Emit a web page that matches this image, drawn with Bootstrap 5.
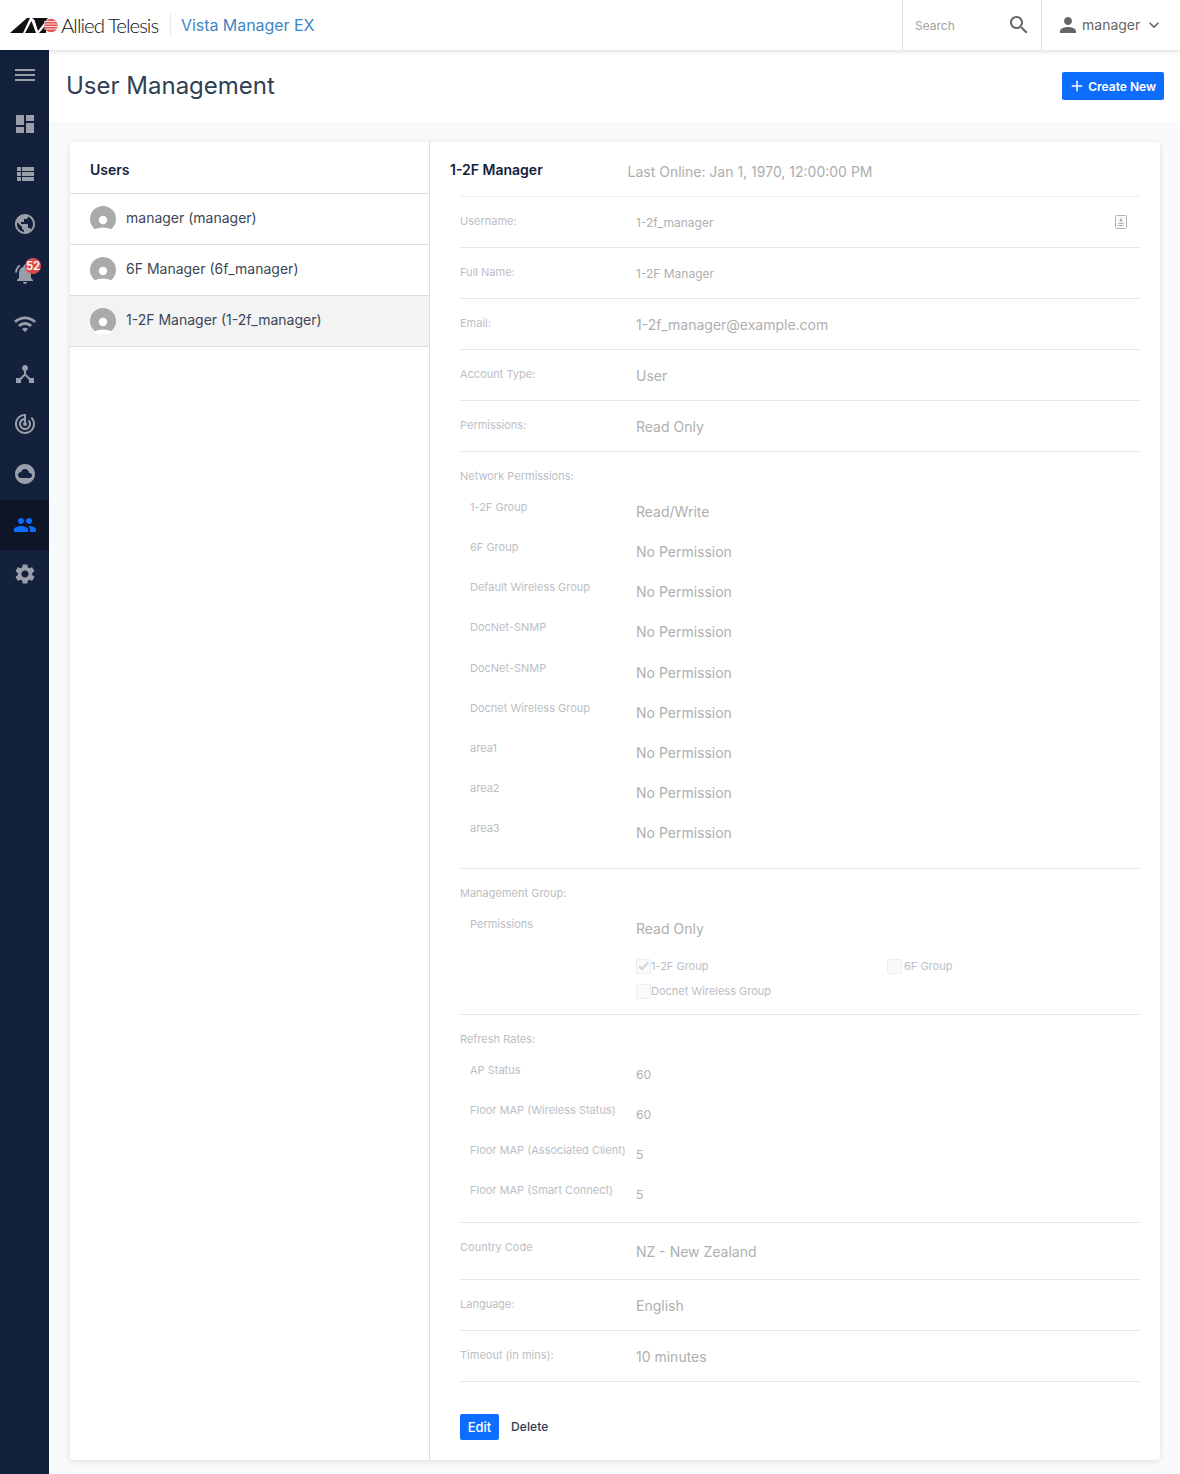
<!DOCTYPE html>
<html lang="en">
<head>
<meta charset="utf-8">
<title>User Management</title>
<link href="https://cdn.jsdelivr.net/npm/bootstrap@5.3.0/dist/css/bootstrap.min.css" rel="stylesheet">
<style>
html,body{height:100%}
body{font-family:Inter,"Liberation Sans",sans-serif;background:#f9fafc;color:#13213c;width:1180px;height:1474px;overflow:hidden}
.topbar{height:50px;background:#fff;box-shadow:0 1px 5px rgba(0,0,0,.16);position:relative;z-index:3}
.logo-mark{width:48px;height:15px;margin-left:10px;flex:none}
.logo-text{font-family:Lato,"Liberation Sans",sans-serif;font-weight:300;font-size:20.5px;letter-spacing:-1px;color:#111;margin-left:3px;line-height:50px;width:98px;white-space:nowrap}
.logo-sep{width:1px;height:24px;background:#e8eaf2;margin:0 10px 0 11px}
.product{font-size:16px;color:#3f86c5;letter-spacing:-.05px}
.search-box{width:139px;height:50px;border-left:1px solid #ddd;padding:0 10px 0 12px}
.search-box span{font-size:12px;color:#a2a2a2;margin-top:2px}
.user-box{width:139px;height:50px;border-left:1px solid #ddd;padding-left:14px;color:#666;font-size:14px}
.user-box span{margin:0 4px 2px 2px}
.side{width:49px;background:#13213c;flex:none;height:1424px}
.side-item{height:50px;color:#9a9ea9;position:relative}
.side-item svg{width:24px;height:24px;fill:currentColor}
.side-item.first{height:49px;padding-top:1px}
.side-item.active{background:#0d1526;color:#0d6efd;margin-top:1px}
.side-item.after{margin-top:-1px}
.alert-pill{position:absolute;left:25px;top:9px;width:16px;height:16px;border-radius:50%;background:#dc4c4c;color:#fff;font-size:11.5px;font-weight:600;line-height:16px;text-align:center;letter-spacing:-.2px}
.title-bar{height:72px;background:#fff;padding:0 16px 0 17px}
.title-bar h1{font-size:24px;font-weight:400;color:#2f3f55;margin:0}
.btn-make{background:#0d6efd;color:#fff;font-size:12px;font-weight:600;height:28px;padding:4px 8px 2px 6px;border-radius:2px;border:0}
.btn-make svg{width:18px;height:18px;fill:#fff;margin:-2px 2px 0 0}
.sheet{width:1090px;height:1318px;margin:20px 0 0 21px;background:#fff;border-radius:4px;box-shadow:0 1px 6px rgba(20,30,60,.12)}
.left-pane{width:360px;flex:none;border-right:1px solid #ddd}
.left-head{height:52px;border-bottom:1px solid #ddd;padding-left:20px;font-size:14px;font-weight:600;color:#13213c;line-height:56px}
.user-row{height:51px;border-bottom:1px solid #ddd;padding-left:20px;font-size:14px;color:#3c4657}
.user-row.sel{background:#f3f3f3}
.user-row span{padding-bottom:4px}
.user-row svg{width:26px;height:26px;margin-right:10px;flex:none}
.right-pane{padding:0 20px 0 30px;flex:1;min-width:0}
.right-head{height:54px;margin-left:-10px;position:relative}
.rh-name{font-size:14px;font-weight:600;color:#13213c;width:177.5px;flex:none}
.rh-last{font-size:14px;color:#adadad;position:relative;top:2px}
.pane-in{border-top:1px solid #eee}
.frow{height:51px;border-bottom:1px solid #e8e8e8;position:relative}
.frow.tall{height:57px}
.lab{width:176px;flex:none;font-size:11px;color:#bcbec5;line-height:16px;padding-top:16px;white-space:nowrap}
.val{font-size:14px;color:#afafaf;line-height:20px;padding-top:16px}
.val.sm{font-size:12px;line-height:18px;padding-top:17px}
.val.pushed{padding-top:19px}
.sect{border-bottom:1px solid #e8e8e8}
.sect.net{height:417px}
.sect.mgmt{height:146px}
.sect.rate{height:208px}
.sect-t{font-size:11px;color:#bcbec5;line-height:16px;padding-top:16px;height:40px}
.srow{height:40.15px}
.srow .lab{padding:7px 0 0 10px;line-height:16px}
.srow .val{padding-top:10px}
.srow .val.sm{padding-top:11px}
.id-ico{position:absolute;right:12px;top:17px;width:14px;height:16px}
.chk-line{height:25px;font-size:11px;color:#bcbec5;padding-left:176px}
.chk-line.one{margin-top:5px}
.fake-chk{width:15px;height:15px;border:1px solid #eceef1;border-radius:2px;background:#fafafa;flex:none;position:relative}
.fake-chk svg{position:absolute;left:0;top:0;width:13px;height:13px;fill:#d2d4d8}
.chk-cell{width:251px}
.chk-gap{margin-right:2px}
.btn-ed{background:#0d6efd;color:#fff;font-size:13px;font-weight:500;width:39px;height:26px;line-height:26px;padding:0;border-radius:2px;border:0;text-align:center}
.btn-del{font-size:12px;font-weight:500;color:#2f3a52;margin-left:12px;letter-spacing:.1px}
.foot-row{padding-top:32px}
</style>
</head>
<body>
<header class="topbar d-flex align-items-center">
  <svg class="logo-mark" viewBox="0 0 48 15"><path d="M0 15 L17 0 H20 L13 15Z M15 15 L21.5 3 L26 15Z M22 0 H38 L28 13 L24.5 2Z M29 15 L36 7 V15Z" fill="#111"/><circle cx="41" cy="7.5" r="6.8" fill="#e25555"/><path d="M34 3.5h14M34 6h14M34 8.5h14M34 11h14" stroke="#fff" stroke-width=".8"/></svg>
  <span class="logo-text">Allied Telesis</span>
  <span class="logo-sep"></span>
  <span class="product">Vista Manager EX</span>
  <div class="ms-auto d-flex">
    <div class="search-box d-flex align-items-center justify-content-between"><span>Search</span><svg width="24" height="24" viewBox="0 0 24 24" fill="#666"><path d="M15.5 14h-.79l-.28-.27C15.41 12.59 16 11.11 16 9.5 16 5.91 13.09 3 9.5 3S3 5.91 3 9.5 5.91 16 9.5 16c1.61 0 3.09-.59 4.23-1.57l.27.28v.79l5 4.99L20.49 19l-4.99-5zm-6 0C7.01 14 5 11.99 5 9.5S7.01 5 9.5 5 14 7.01 14 9.5 11.99 14 9.5 14z"/></svg></div>
    <div class="user-box d-flex align-items-center"><svg width="24" height="24" viewBox="0 0 24 24" fill="#666"><path d="M12 12c2.21 0 4-1.79 4-4s-1.79-4-4-4-4 1.79-4 4 1.79 4 4 4zm0 2c-2.67 0-8 1.34-8 4v2h16v-2c0-2.66-5.33-4-8-4z"/></svg><span>manager</span><svg width="20" height="20" viewBox="0 0 24 24" fill="#666"><path d="M16.59 8.59L12 13.17 7.41 8.59 6 10l6 6 6-6z"/></svg></div>
  </div>
</header>
<div class="d-flex">
  <nav class="side">
    <div class="side-item first d-flex align-items-center justify-content-center"><svg viewBox="0 0 24 24"><path d="M2 18h20v-2H2zm0-5h20v-2H2zM2 6v2h20V6z"/></svg></div>
    <div class="side-item d-flex align-items-center justify-content-center"><svg viewBox="0 0 24 24"><path d="M3 13h8V3H3v10zm0 8h8v-6H3v6zm10 0h8V11h-8v10zm0-18v6h8V3h-8z"/></svg></div>
    <div class="side-item d-flex align-items-center justify-content-center"><svg viewBox="0 0 24 24"><path d="M4 14h4v-4H4v4zm0 5h4v-4H4v4zM4 9h4V5H4v4zm5 5h12v-4H9v4zm0 5h12v-4H9v4zM9 5v4h12V5H9z"/></svg></div>
    <div class="side-item d-flex align-items-center justify-content-center"><svg viewBox="0 0 24 24"><path d="M12 2C6.48 2 2 6.48 2 12s4.48 10 10 10 10-4.48 10-10S17.52 2 12 2zm-1 17.93c-3.95-.49-7-3.85-7-7.93 0-.62.08-1.21.21-1.79L9 15v1c0 1.1.9 2 2 2v1.93zm6.9-2.54c-.26-.81-1-1.39-1.9-1.39h-1v-3c0-.55-.45-1-1-1H8v-2h2c.55 0 1-.45 1-1V7h2c1.1 0 2-.9 2-2v-.41c2.93 1.19 5 4.06 5 7.41 0 2.08-.8 3.97-2.1 5.39z"/></svg></div>
    <div class="side-item d-flex align-items-center justify-content-center"><svg viewBox="0 0 24 24"><path d="M7.58 4.08L6.15 2.65C3.75 4.48 2.17 7.3 2.03 10.5h2c.15-2.65 1.51-4.97 3.55-6.42zm12.39 6.42h2c-.15-3.2-1.73-6.02-4.12-7.85l-1.42 1.43c2.02 1.45 3.39 3.77 3.54 6.42zM18 11c0-3.07-1.64-5.64-4.5-6.32V4c0-.83-.67-1.5-1.5-1.5s-1.5.67-1.5 1.5v.68C7.63 5.36 6 7.92 6 11v5l-2 2v1h16v-1l-2-2v-5zm-6 11c.14 0 .27-.01.4-.04.65-.14 1.18-.58 1.44-1.18.1-.24.15-.5.15-.78h-4c.01 1.1.9 2 2.01 2z"/></svg><span class="alert-pill">52</span></div>
    <div class="side-item d-flex align-items-center justify-content-center"><svg viewBox="0 0 24 24"><path d="M1 9l2 2c4.97-4.97 13.03-4.97 18 0l2-2C16.93 2.93 7.08 2.93 1 9zm8 8l3 3 3-3c-1.65-1.66-4.34-1.66-6 0zm-4-4l2 2c2.76-2.76 7.24-2.76 10 0l2-2C15.14 9.14 8.87 9.14 5 13z"/></svg></div>
    <div class="side-item d-flex align-items-center justify-content-center"><svg viewBox="0 0 24 24"><path d="M17 16l-4-4V8.82C14.16 8.4 15 7.3 15 6c0-1.66-1.34-3-3-3S9 4.34 9 6c0 1.3.84 2.4 2 2.82V12l-4 4H3v5h5v-3.05l4-4.2 4 4.2V21h5v-5h-4z"/></svg></div>
    <div class="side-item d-flex align-items-center justify-content-center"><svg viewBox="0 0 24 24"><path d="M19.07 4.93l-1.41 1.41C19.1 7.79 20 9.79 20 12c0 4.42-3.58 8-8 8s-8-3.58-8-8c0-4.08 3.05-7.44 7-7.93v2.02C8.16 6.57 6 9.03 6 12c0 3.31 2.69 6 6 6s6-2.69 6-6c0-1.66-.67-3.16-1.76-4.24l-1.41 1.41C15.55 9.9 16 10.9 16 12c0 2.21-1.79 4-4 4s-4-1.79-4-4c0-1.86 1.28-3.41 3-3.86v2.14c-.6.35-1 .98-1 1.72 0 1.1.9 2 2 2s2-.9 2-2c0-.74-.4-1.38-1-1.72V2h-1C6.48 2 2 6.48 2 12s4.48 10 10 10 10-4.48 10-10c0-2.76-1.12-5.26-2.93-7.07z"/></svg></div>
    <div class="side-item d-flex align-items-center justify-content-center"><svg viewBox="0 0 24 24"><path d="M12 2C6.48 2 2 6.48 2 12s4.48 10 10 10 10-4.48 10-10S17.52 2 12 2zm4.5 14H8c-1.66 0-3-1.34-3-3s1.34-3 3-3l.14.01C8.58 8.28 10.13 7 12 7c2.21 0 4 1.79 4 4h.5c1.38 0 2.5 1.12 2.5 2.5S17.88 16 16.5 16z"/></svg></div>
    <div class="side-item active d-flex align-items-center justify-content-center"><svg viewBox="0 0 24 24"><path d="M16 11c1.66 0 2.99-1.34 2.99-3S17.66 5 16 5c-1.66 0-3 1.34-3 3s1.34 3 3 3zm-8 0c1.66 0 2.99-1.34 2.99-3S9.66 5 8 5C6.34 5 5 6.34 5 8s1.34 3 3 3zm0 2c-2.33 0-7 1.17-7 3.5V19h14v-2.5c0-2.33-4.67-3.5-7-3.5zm8 0c-.29 0-.62.02-.97.05 1.16.84 1.97 1.97 1.97 3.45V19h6v-2.5c0-2.33-4.67-3.5-7-3.5z"/></svg></div>
    <div class="side-item after d-flex align-items-center justify-content-center"><svg viewBox="0 0 24 24"><path d="M19.14 12.94c.04-.3.06-.61.06-.94 0-.32-.02-.64-.07-.94l2.03-1.58c.18-.14.23-.41.12-.61l-1.92-3.32c-.12-.22-.37-.29-.59-.22l-2.39.96c-.5-.38-1.03-.7-1.62-.94l-.36-2.54c-.04-.24-.24-.41-.48-.41h-3.84c-.24 0-.43.17-.47.41l-.36 2.54c-.59.24-1.13.57-1.62.94l-2.39-.96c-.22-.08-.47 0-.59.22L2.74 8.87c-.12.21-.08.47.12.61l2.03 1.58c-.05.3-.09.63-.09.94s.02.64.07.94l-2.03 1.58c-.18.14-.23.41-.12.61l1.92 3.32c.12.22.37.29.59.22l2.39-.96c.5.38 1.03.7 1.62.94l.36 2.54c.05.24.24.41.48.41h3.84c.24 0 .44-.17.47-.41l.36-2.54c.59-.24 1.13-.56 1.62-.94l2.39.96c.22.08.47 0 .59-.22l1.92-3.32c.12-.22.07-.47-.12-.61l-2.01-1.58zM12 15.6c-1.98 0-3.6-1.62-3.6-3.6s1.62-3.6 3.6-3.6 3.6 1.62 3.6 3.6-1.62 3.6-3.6 3.6z"/></svg></div>
  </nav>
  <main class="flex-grow-1">
    <div class="title-bar d-flex align-items-center justify-content-between">
      <h1>User Management</h1>
      <button class="btn btn-make d-flex align-items-center" type="button"><svg viewBox="0 0 24 24"><path d="M19 13h-6v6h-2v-6H5v-2h6V5h2v6h6v2z"/></svg>Create New</button>
    </div>
    <div class="sheet d-flex">
      <section class="left-pane">
        <div class="left-head">Users</div>
        <div class="user-row d-flex align-items-center"><svg viewBox="0 0 26 26"><circle cx="13" cy="13" r="13" fill="#aaa"/><circle cx="13" cy="14" r="4.2" fill="#fff"/><path d="M4 23.5 Q13 19.5 22 23.5 L20 27H6Z" fill="#fff"/></svg><span>manager (manager)</span></div>
        <div class="user-row d-flex align-items-center"><svg viewBox="0 0 26 26"><circle cx="13" cy="13" r="13" fill="#aaa"/><circle cx="13" cy="14" r="4.2" fill="#fff"/><path d="M4 23.5 Q13 19.5 22 23.5 L20 27H6Z" fill="#fff"/></svg><span>6F Manager (6f_manager)</span></div>
        <div class="user-row sel d-flex align-items-center"><svg viewBox="0 0 26 26"><circle cx="13" cy="13" r="13" fill="#aaa"/><circle cx="13" cy="14" r="4.2" fill="#fff"/><path d="M4 23.5 Q13 19.5 22 23.5 L20 27H6Z" fill="#fff"/></svg><span>1-2F Manager (1-2f_manager)</span></div>
      </section>
      <section class="right-pane">
        <div class="right-head d-flex align-items-center"><span class="rh-name">1-2F Manager</span><span class="rh-last">Last Online: Jan 1, 1970, 12:00:00 PM</span></div>
        <div class="pane-in">
          <div class="frow d-flex"><div class="lab">Username:</div><div class="val sm">1-2f_manager</div>
            <svg class="id-ico" viewBox="0 0 14 16"><rect x="1.5" y="1.5" width="11" height="13" rx="1" fill="#fafafa" stroke="#b5b5b5"/><path d="M7 3.5 L8.6 7.5 H5.4Z" fill="#aaa"/><path d="M4.5 9h5v1h-5zM4.5 11h5v1h-5z" fill="#aaa"/></svg></div>
          <div class="frow d-flex"><div class="lab">Full Name:</div><div class="val sm">1-2F Manager</div></div>
          <div class="frow d-flex"><div class="lab">Email:</div><div class="val">1-2f_manager@example.com</div></div>
          <div class="frow d-flex"><div class="lab">Account Type:</div><div class="val">User</div></div>
          <div class="frow d-flex"><div class="lab">Permissions:</div><div class="val">Read Only</div></div>
          <div class="sect net">
            <div class="sect-t">Network Permissions:</div>
            <div class="srow d-flex"><div class="lab">1-2F Group</div><div class="val">Read/Write</div></div>
            <div class="srow d-flex"><div class="lab">6F Group</div><div class="val">No Permission</div></div>
            <div class="srow d-flex"><div class="lab">Default Wireless Group</div><div class="val">No Permission</div></div>
            <div class="srow d-flex"><div class="lab">DocNet-SNMP</div><div class="val">No Permission</div></div>
            <div class="srow d-flex"><div class="lab">DocNet-SNMP</div><div class="val">No Permission</div></div>
            <div class="srow d-flex"><div class="lab">Docnet Wireless Group</div><div class="val">No Permission</div></div>
            <div class="srow d-flex"><div class="lab">area1</div><div class="val">No Permission</div></div>
            <div class="srow d-flex"><div class="lab">area2</div><div class="val">No Permission</div></div>
            <div class="srow d-flex"><div class="lab">area3</div><div class="val">No Permission</div></div>
          </div>
          <div class="sect mgmt">
            <div class="sect-t">Management Group:</div>
            <div class="srow d-flex"><div class="lab">Permissions</div><div class="val">Read Only</div></div>
            <div class="chk-line one d-flex align-items-center"><div class="chk-cell d-flex align-items-center"><span class="fake-chk"><svg viewBox="0 0 24 24"><path d="M9.5 20 L3 13.5 l3-3 3.5 3.5 L19 3 l3 3z"/></svg></span>1-2F Group</div><div class="d-flex align-items-center"><span class="fake-chk chk-gap"></span>6F Group</div></div>
            <div class="chk-line d-flex align-items-center"><span class="fake-chk"></span>Docnet Wireless Group</div>
          </div>
          <div class="sect rate">
            <div class="sect-t">Refresh Rates:</div>
            <div class="srow d-flex"><div class="lab">AP Status</div><div class="val sm">60</div></div>
            <div class="srow d-flex"><div class="lab">Floor MAP (Wireless Status)</div><div class="val sm">60</div></div>
            <div class="srow d-flex"><div class="lab">Floor MAP (Associated Client)</div><div class="val sm">5</div></div>
            <div class="srow d-flex"><div class="lab">Floor MAP (Smart Connect)</div><div class="val sm">5</div></div>
          </div>
          <div class="frow tall d-flex"><div class="lab">Country Code</div><div class="val pushed">NZ - New Zealand</div></div>
          <div class="frow d-flex"><div class="lab">Language:</div><div class="val">English</div></div>
          <div class="frow d-flex"><div class="lab">Timeout (in mins):</div><div class="val">10 minutes</div></div>
          <div class="foot-row d-flex align-items-center"><button class="btn btn-ed" type="button">Edit</button><span class="btn-del">Delete</span></div>
        </div>
      </section>
    </div>
  </main>
</div>
</body>
</html>
